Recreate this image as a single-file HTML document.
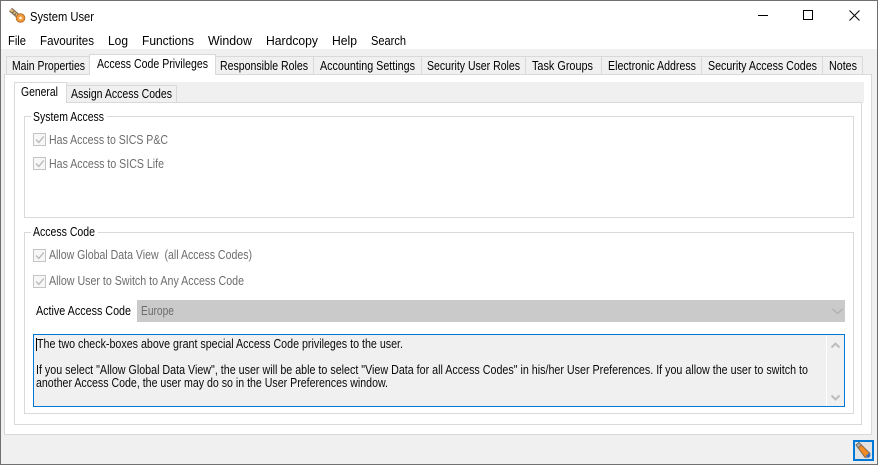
<!DOCTYPE html>
<html><head><meta charset="utf-8"><title>System User</title>
<style>
html,body{margin:0;padding:0;width:878px;height:465px;overflow:hidden;background:#f0f0f0}
svg{display:block}
text{font-family:"Liberation Sans",sans-serif;font-size:12.5px;fill:#000;white-space:pre}
.g{fill:#6d6d6d}
.d{fill:#0a0a0a}
</style></head><body>
<svg width="878" height="465" viewBox="0 0 878 465" xmlns="http://www.w3.org/2000/svg">
<rect width="878" height="465" fill="#f0f0f0"/>
<rect x="1" y="1" width="876" height="48" fill="#fff"/>
<!-- key icon -->
<g>
<path d="M10.500 9.500L18 16" stroke="#7d6a55" stroke-width="4.500" fill="none"/>
<path d="M10.500 9.500L18 16" stroke="#e8b878" stroke-width="2.400" fill="none"/>
<path d="M12 13l2-1.500M14.500 15l1.500-1.500" stroke="#7d6a55" stroke-width="1.400" fill="none"/>
<circle cx="20.500" cy="18" r="4.300" fill="#f29a3c" stroke="#b8702a" stroke-width="1"/>
<circle cx="20.500" cy="18" r="1.400" fill="#fff3dd"/>
</g>
<text x="30" y="21" textLength="64" lengthAdjust="spacingAndGlyphs">System User</text>
<!-- window controls -->
<path d="M758 15.500H768" stroke="#000"/>
<rect x="803.500" y="10.500" width="9" height="9" fill="none" stroke="#000"/>
<path d="M849.500 10.500L859.500 20.500M859.500 10.500L849.500 20.500" stroke="#000" fill="none"/>
<!-- menu -->
<text x="8" y="45" textLength="18" lengthAdjust="spacingAndGlyphs">File</text>
<text x="40" y="45" textLength="54" lengthAdjust="spacingAndGlyphs">Favourites</text>
<text x="108" y="45" textLength="20" lengthAdjust="spacingAndGlyphs">Log</text>
<text x="142" y="45" textLength="52" lengthAdjust="spacingAndGlyphs">Functions</text>
<text x="208" y="45" textLength="44" lengthAdjust="spacingAndGlyphs">Window</text>
<text x="266" y="45" textLength="52" lengthAdjust="spacingAndGlyphs">Hardcopy</text>
<text x="332" y="45" textLength="25" lengthAdjust="spacingAndGlyphs">Help</text>
<text x="371" y="45" textLength="35" lengthAdjust="spacingAndGlyphs">Search</text>
<!-- outer tab panel -->
<rect x="4.500" y="74.500" width="867" height="360" fill="#fff" stroke="#d9d9d9"/>
<!-- outer tabs -->
<g fill="#f0f0f0" stroke="#d9d9d9">
<rect x="6.500" y="56.500" width="83" height="18"/>
<rect x="215.500" y="56.500" width="98" height="18"/>
<rect x="313.500" y="56.500" width="108" height="18"/>
<rect x="421.500" y="56.500" width="104" height="18"/>
<rect x="525.500" y="56.500" width="76" height="18"/>
<rect x="601.500" y="56.500" width="100" height="18"/>
<rect x="701.500" y="56.500" width="121" height="18"/>
<rect x="822.500" y="56.500" width="40" height="18"/>
</g>
<path d="M89.500 75V54.500H215.500V75" fill="#fff" stroke="#d9d9d9"/>
<rect x="90" y="74" width="125" height="2" fill="#fff"/>
<text x="12" y="70" textLength="73" lengthAdjust="spacingAndGlyphs">Main Properties</text>
<text x="97" y="68" textLength="111" lengthAdjust="spacingAndGlyphs">Access Code Privileges</text>
<text x="220" y="70" textLength="88" lengthAdjust="spacingAndGlyphs">Responsible Roles</text>
<text x="320" y="70" textLength="95" lengthAdjust="spacingAndGlyphs">Accounting Settings</text>
<text x="427" y="70" textLength="93" lengthAdjust="spacingAndGlyphs">Security User Roles</text>
<text x="532" y="70" textLength="61" lengthAdjust="spacingAndGlyphs">Task Groups</text>
<text x="608" y="70" textLength="88" lengthAdjust="spacingAndGlyphs">Electronic Address</text>
<text x="708" y="70" textLength="109" lengthAdjust="spacingAndGlyphs">Security Access Codes</text>
<text x="829" y="70" textLength="28" lengthAdjust="spacingAndGlyphs">Notes</text>
<!-- inner strip -->
<rect x="14" y="82" width="850" height="21" fill="#f0f0f0"/>
<rect x="14.500" y="102.500" width="847" height="322" fill="#fff" stroke="#d9d9d9"/>
<rect x="66.500" y="85.500" width="110" height="17" fill="#f0f0f0" stroke="#d9d9d9"/>
<path d="M14.500 103V82.500H66.500V103" fill="#fff" stroke="#d9d9d9"/>
<rect x="15" y="102" width="51" height="2" fill="#fff"/>
<text x="21" y="96" textLength="37" lengthAdjust="spacingAndGlyphs">General</text>
<text x="71" y="98" textLength="101" lengthAdjust="spacingAndGlyphs">Assign Access Codes</text>
<!-- group 1 -->
<rect x="24.500" y="116.500" width="829" height="101" fill="#fff" stroke="#d9d9d9"/>
<rect x="31" y="112" width="76" height="10" fill="#fff"/>
<text x="33" y="121" textLength="71" lengthAdjust="spacingAndGlyphs">System Access</text>
<text class="g" x="49" y="144" textLength="119" lengthAdjust="spacingAndGlyphs">Has Access to SICS P&amp;C</text>
<text class="g" x="49" y="168" textLength="115" lengthAdjust="spacingAndGlyphs">Has Access to SICS Life</text>
<!-- group 2 -->
<rect x="24.500" y="232.500" width="829" height="181" fill="#fff" stroke="#d9d9d9"/>
<rect x="31" y="227" width="67" height="10" fill="#fff"/>
<text x="33" y="236" textLength="62" lengthAdjust="spacingAndGlyphs">Access Code</text>
<text class="g" x="49" y="259" textLength="203" lengthAdjust="spacingAndGlyphs">Allow Global Data View  (all Access Codes)</text>
<text class="g" x="49" y="285" textLength="195" lengthAdjust="spacingAndGlyphs">Allow User to Switch to Any Access Code</text>
<!-- checkboxes -->
<g fill="#f7f7f7" stroke="#c4c4c4">
<rect x="33.500" y="133.500" width="12" height="12"/>
<rect x="33.500" y="157.500" width="12" height="12"/>
<rect x="33.500" y="249.500" width="12" height="12"/>
<rect x="33.500" y="275.500" width="12" height="12"/>
</g>
<g fill="none" stroke="#bcbcbc" stroke-width="1.400">
<path d="M36 139.500l2.800 3 5-6"/>
<path d="M36 163.500l2.800 3 5-6"/>
<path d="M36 255.500l2.800 3 5-6"/>
<path d="M36 281.500l2.800 3 5-6"/>
</g>
<text x="36" y="315" textLength="95" lengthAdjust="spacingAndGlyphs">Active Access Code</text>
<rect x="137" y="300" width="708" height="22" fill="#cacaca"/>
<text class="g" x="141" y="315" textLength="33" lengthAdjust="spacingAndGlyphs">Europe</text>
<path d="M832.500 309l5 4.500 5-4.500" fill="none" stroke="#b0b0b0" stroke-width="1.300"/>
<!-- text box -->
<rect x="33.500" y="334.500" width="811" height="72" fill="#f0f0f0" stroke="#0078d7"/>
<rect x="826" y="336" width="1" height="70" fill="#fff"/>
<path d="M831.500 347.500l4-4 4 4" fill="none" stroke="#bdbdbd" stroke-width="2"/>
<path d="M831.500 395.500l4 4 4-4" fill="none" stroke="#bdbdbd" stroke-width="2"/>
<rect x="36" y="338" width="1" height="13" fill="#000"/>
<text class="d" x="37" y="348" textLength="366" lengthAdjust="spacingAndGlyphs">The two check-boxes above grant special Access Code privileges to the user.</text>
<text class="d" x="36" y="374" textLength="772" lengthAdjust="spacingAndGlyphs">If you select "Allow Global Data View", the user will be able to select "View Data for all Access Codes" in his/her User Preferences. If you allow the user to switch to</text>
<text class="d" x="36" y="387" textLength="352" lengthAdjust="spacingAndGlyphs">another Access Code, the user may do so in the User Preferences window.</text>
<!-- pencil button -->
<rect x="854" y="441" width="19" height="19" fill="#e2e2e2" stroke="#0078d7" stroke-width="2"/>
<path d="M856 445l3-2.500 11 11-2 3.500-3 .5z" fill="#f08a24" stroke="#6e5a4a" stroke-width=".8"/>
<path d="M856 445l3-2.500 2.500 2.500-3.500 3z" fill="#b0a8a0" stroke="#5a5a5a" stroke-width=".6"/>
<path d="M865.500 456l4.500-3.500 .5 3.500-2 2z" fill="#2f6fc4"/>
<!-- window border -->
<rect x="0.500" y="0.500" width="877" height="464" fill="none" stroke="#6f6f6f"/>
</svg>
</body></html>
